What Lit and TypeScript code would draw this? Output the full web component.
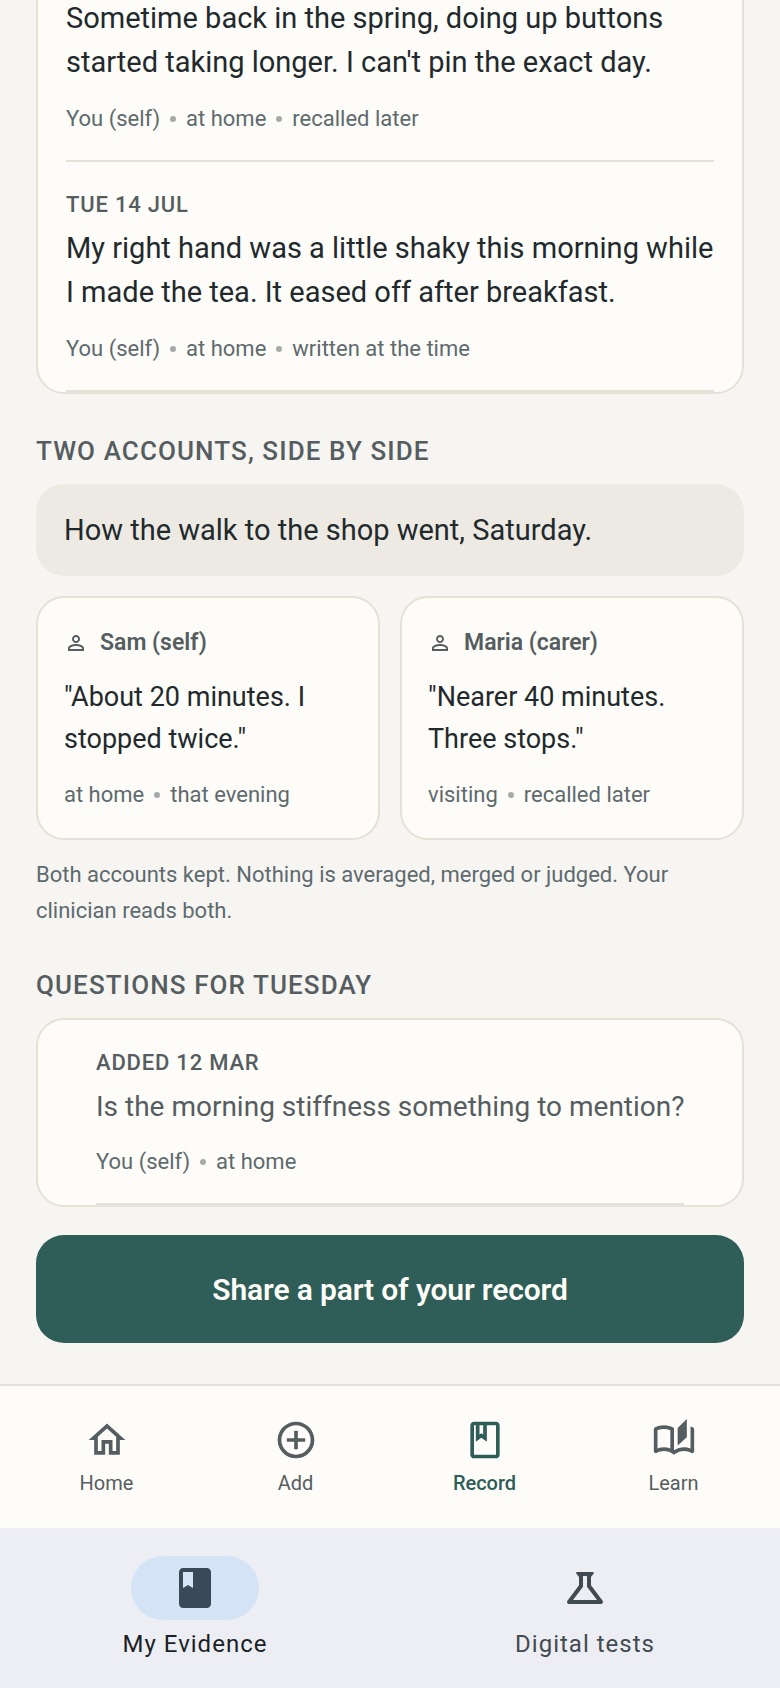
import { LitElement, html, css, svg } from 'lit';
import { customElement } from 'lit/decorators.js';

const icons = {
  home: svg`<path d="M12 5.69l5 4.5V18h-2v-6H9v6H7v-7.81l5-4.5M12 3L2 12h3v8h6v-6h2v6h6v-8h3L12 3z"/>`,
  add: svg`<path d="M13 7h-2v4H7v2h4v4h2v-4h4v-2h-4V7zm-1-5C6.48 2 2 6.48 2 12s4.48 10 10 10 10-4.48 10-10S17.52 2 12 2zm0 18c-4.41 0-8-3.59-8-8s3.59-8 8-8 8 3.59 8 8-3.59 8-8 8z"/>`,
  book: svg`<path d="M18 2H6c-1.1 0-2 .9-2 2v16c0 1.1.9 2 2 2h12c1.1 0 2-.9 2-2V4c0-1.1-.9-2-2-2zM9 4h2v5l-1-.75L9 9V4zm9 16H6V4h1v9l3-2.25L13 13V4h5v16z"/>`,
  bookFilled: svg`<path d="M18 2H6c-1.1 0-2 .9-2 2v16c0 1.1.9 2 2 2h12c1.1 0 2-.9 2-2V4c0-1.1-.9-2-2-2zM6 4h5v8l-2.5-1.5L6 12V4z"/>`,
  learn: svg`<path d="M22.47 5.2c-.47-.24-.96-.44-1.47-.61v12.03c-1.14-.41-2.31-.62-3.5-.62-1.9 0-3.78.54-5.5 1.58V5.48C10.38 4.55 8.51 4 6.5 4c-1.79 0-3.48.44-4.97 1.2-.33.16-.53.51-.53.88v12.08c0 .58.47.99 1 .99.16 0 .32-.04.48-.12C3.69 18.4 5.05 18 6.5 18c2.07 0 3.98.82 5.5 2 1.52-1.18 3.43-2 5.5-2 1.45 0 2.81.4 4.02 1.04.16.08.32.12.48.12.52 0 1-.41 1-.99V6.08c0-.37-.2-.72-.53-.88zM10 16.62C8.86 16.21 7.69 16 6.5 16c-1.19 0-2.36.21-3.5.62V6.71C4.11 6.24 5.28 6 6.5 6c1.2 0 2.39.25 3.5.72v9.9zM19 .5l-5 5V15l5-4.5V.5z"/>`,
  flask: svg`<path d="M13 11.33L18 18H6l5-6.67V6h2m2.96-2H8.04c-.42 0-.65.48-.39.81L9 6.5v4.17L3.2 18.4c-.49.66-.02 1.6.8 1.6h16c.82 0 1.29-.94.8-1.6L15 10.67V6.5l1.35-1.69c.26-.33.03-.81-.39-.81z"/>`,
  person: svg`<path d="M12 5.9c1.16 0 2.1.94 2.1 2.1s-.94 2.1-2.1 2.1S9.9 9.16 9.9 8s.94-2.1 2.1-2.1m0 9c2.97 0 6.1 1.46 6.1 2.1v1.1H5.9V17c0-.64 3.13-2.1 6.1-2.1M12 4C9.79 4 8 5.79 8 8s1.79 4 4 4 4-1.79 4-4-1.79-4-4-4zm0 9c-2.67 0-8 1.34-8 4v3h16v-3c0-2.66-5.33-4-8-4z"/>`,
};

const icon = (body: unknown) =>
  html`<svg viewBox="0 0 24 24" fill="currentColor">${body}</svg>`;

const meta = (parts: string[]) => html`<div class="meta">
  ${parts.map((p, i) => html`${i > 0 ? html`<span class="dot"></span>` : ''}<span>${p}</span>`)}
</div>`;

@customElement('app-root')
export class AppRoot extends LitElement {
  static styles = css`
    :host {
      display: flex;
      flex-direction: column;
      width: 780px;
      height: 1688px;
      background: #f6f5f2;
      color: #22292c;
      font-family: Roboto, sans-serif;
    }

    /* page is scrolled to the end, so content is pinned to the bottom and clipped at the top */
    .scroll {
      flex: 1;
      min-height: 0;
      overflow: hidden;
      display: flex;
      flex-direction: column;
      justify-content: flex-end;
      padding: 0 36px 41px;
    }
    .scroll > * {
      flex-shrink: 0;
    }

    .card {
      box-sizing: border-box;
      background: #fdfcf8;
      border: 2px solid #e3e2d8;
      border-radius: 28px;
    }
    .list {
      padding: 0 28px;
    }
    .list.inset {
      padding: 0 58px;
    }

    .item {
      padding: 27px 0 23px;
      border-bottom: 2px solid #e3e2d8;
    }
    .item.first {
      padding-top: 40px;
    }
    .date {
      font-size: 22px;
      font-weight: 500;
      line-height: 32px;
      letter-spacing: 0.8px;
      color: #565d60;
      margin-bottom: 5px;
    }
    .body {
      font-size: 29px;
      line-height: 44px;
    }
    .inset .date {
      margin-bottom: 6px;
    }
    .inset .body {
      font-size: 28px;
      white-space: nowrap;
      color: #565d60;
    }
    .inset .meta {
      margin-top: 15px;
    }
    .meta {
      display: flex;
      align-items: center;
      gap: 10px;
      margin-top: 17px;
      font-size: 22px;
      line-height: 36px;
      color: #5e6a6e;
    }
    .dot {
      width: 6px;
      height: 6px;
      border-radius: 50%;
      background: #a4aaaa;
    }

    .title {
      margin: 38px 0 15px;
      font-size: 26px;
      font-weight: 500;
      line-height: 36px;
      letter-spacing: 1.1px;
      color: #565d60;
    }
    .title.accounts-title {
      margin-top: 39px;
    }

    .prompt {
      padding: 24px 28px;
      border-radius: 28px;
      background: #edeae3;
      font-size: 29px;
      line-height: 44px;
    }

    .accounts {
      display: grid;
      grid-template-columns: 1fr 1fr;
      gap: 20px;
      margin-top: 20px;
    }
    .account {
      padding: 27px 26px 25px;
    }
    .who {
      display: flex;
      align-items: center;
      gap: 12px;
      font-size: 23px;
      font-weight: 600;
      line-height: 36px;
      color: #565d60;
    }
    .who svg {
      width: 24px;
      height: 24px;
    }
    .quote {
      margin-top: 15px;
      font-size: 27px;
      line-height: 42px;
    }

    .note {
      margin-top: 17px;
      font-size: 22px;
      line-height: 36px;
      color: #5e6a6e;
    }

    .share {
      display: flex;
      align-items: center;
      justify-content: center;
      margin-top: 28px;
      height: 108px;
      border-radius: 28px;
      background: #2f5d57;
      color: #fdfcf8;
      font-size: 30px;
      font-weight: 600;
      letter-spacing: -0.15px;
    }

    .tabs {
      box-sizing: border-box;
      display: grid;
      grid-template-columns: repeat(4, 1fr);
      height: 144px;
      padding: 0 12px;
      border-top: 2px solid #e3e2d8;
      background: #fdfcf8;
    }
    .tab {
      display: flex;
      flex-direction: column;
      align-items: center;
      padding-top: 32px;
      font-size: 20px;
      line-height: 28px;
      color: #565d60;
    }
    .tab svg {
      width: 44px;
      height: 44px;
      margin-bottom: 7px;
    }
    .tab.active {
      color: #2f5d57;
      font-weight: 500;
    }

    .bar {
      display: grid;
      grid-template-columns: 1fr 1fr;
      height: 160px;
      background: #eceef4;
    }
    .dest {
      display: flex;
      flex-direction: column;
      align-items: center;
      padding-top: 28px;
      font-size: 24px;
      line-height: 32px;
      letter-spacing: 1px;
      color: #424a51;
    }
    .pill {
      display: flex;
      align-items: center;
      justify-content: center;
      width: 128px;
      height: 64px;
      margin-bottom: 8px;
      border-radius: 32px;
    }
    .pill svg {
      width: 48px;
      height: 48px;
    }
    .dest.active {
      color: #1b1f26;
    }
    .dest.active .pill {
      background: #d5e3f6;
      color: #3b4858;
    }
  `;

  render() {
    return html`
      <div class="scroll">
        <div class="card list">
          <div class="item first">
            <div class="body">
              Sometime back in the spring, doing up buttons started taking longer. I can't pin the
              exact day.
            </div>
            ${meta(['You (self)', 'at home', 'recalled later'])}
          </div>
          <div class="item">
            <div class="date">TUE 14 JUL</div>
            <div class="body">
              My right hand was a little shaky this morning while I made the tea. It eased off after
              breakfast.
            </div>
            ${meta(['You (self)', 'at home', 'written at the time'])}
          </div>
        </div>

        <div class="title accounts-title">TWO ACCOUNTS, SIDE BY SIDE</div>
        <div class="prompt">How the walk to the shop went, Saturday.</div>
        <div class="accounts">
          <div class="card account">
            <div class="who">${icon(icons.person)}Sam (self)</div>
            <div class="quote">"About 20 minutes. I stopped twice."</div>
            ${meta(['at home', 'that evening'])}
          </div>
          <div class="card account">
            <div class="who">${icon(icons.person)}Maria (carer)</div>
            <div class="quote">"Nearer 40 minutes. Three stops."</div>
            ${meta(['visiting', 'recalled later'])}
          </div>
        </div>
        <div class="note">
          Both accounts kept. Nothing is averaged, merged or judged. Your clinician reads both.
        </div>

        <div class="title">QUESTIONS FOR TUESDAY</div>
        <div class="card list inset">
          <div class="item">
            <div class="date">ADDED 12 MAR</div>
            <div class="body">Is the morning stiffness something to mention?</div>
            ${meta(['You (self)', 'at home'])}
          </div>
        </div>

        <div class="share">Share a part of your record</div>
      </div>

      <nav class="tabs">
        <div class="tab">${icon(icons.home)}Home</div>
        <div class="tab">${icon(icons.add)}Add</div>
        <div class="tab active">${icon(icons.book)}Record</div>
        <div class="tab">${icon(icons.learn)}Learn</div>
      </nav>
      <nav class="bar">
        <div class="dest active">
          <div class="pill">${icon(icons.bookFilled)}</div>
          My Evidence
        </div>
        <div class="dest">
          <div class="pill">${icon(icons.flask)}</div>
          Digital tests
        </div>
      </nav>
    `;
  }
}
